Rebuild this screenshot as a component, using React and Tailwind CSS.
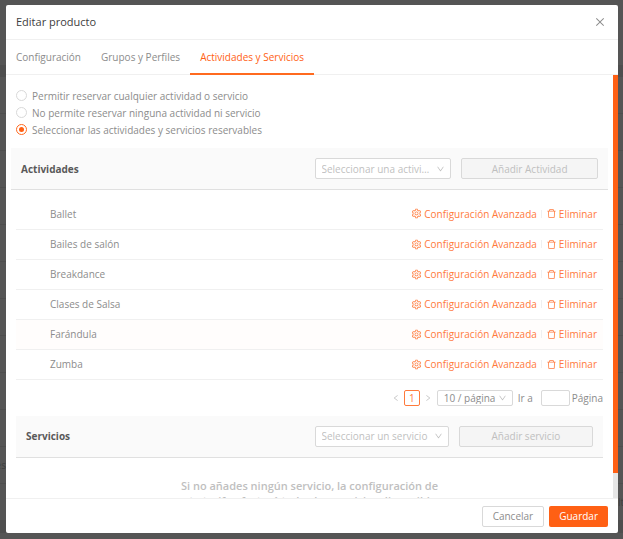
import { useState } from 'react';
import clsx from 'clsx';
import {
  AiOutlineClose,
  AiOutlineDelete,
  AiOutlineDown,
  AiOutlineLeft,
  AiOutlineRight,
  AiOutlineSetting
} from 'react-icons/ai';

const TABS = ['Configuración', 'Grupos y Perfiles', 'Actividades y Servicios'];

const MODES = [
  { id: 'all', label: 'Permitir reservar cualquier actividad o servicio' },
  { id: 'none', label: 'No permite reservar ninguna actividad ni servicio' },
  { id: 'some', label: 'Seleccionar las actividades y servicios reservables' }
];

const ACTIVITIES = ['Ballet', 'Bailes de salón', 'Breakdance', 'Clases de Salsa', 'Farándula', 'Zumba'];

// Rows of the page that stays dimmed under the dialog
const PAGE_ROWS = [
  {}, {}, {}, {}, {}, {}, {}, {}, {}, {}, { left: 'es' }, { right: 'lt' }
];

function DimmedPage() {
  return (
    <div aria-hidden="true" className="absolute inset-0 overflow-hidden pt-[65px] text-[#3f3f3f]">
      <div className="h-3 bg-[#4e4e4e]" />
      {PAGE_ROWS.map((row, index) => (
        <div key={index} className="flex items-center justify-between h-[37px] border-b border-[#4e4e4e]">
          <span className="flex justify-end w-1.5">{row.left}</span>
          <span className="w-[5px]">{row.right}</span>
        </div>
      ))}
      <div className="h-3 bg-[#4e4e4e]" />
    </div>
  );
}

// Select with the arrow drawn over its right edge
function Select({ label, option, compact, className }) {
  return (
    <div className={clsx('relative', className)}>
      <select
        aria-label={label}
        className={clsx(
          'block w-full h-full appearance-none truncate rounded-xs border border-[#d9d9d9] bg-white pl-1.5 leading-3',
          compact ? 'pr-3.5' : 'pr-[18px]'
        )}
      >
        <option>{option}</option>
      </select>
      <AiOutlineDown className="absolute right-1.5 top-1/2 -translate-y-1/2 w-[9px] h-[9px] text-[#bfbfbf] pointer-events-none" />
    </div>
  );
}

// Grey bar with a title, a picker and the add button
function SectionHeader({ title, placeholder, action }) {
  return (
    <div className="grid grid-cols-4 gap-2.5 items-center px-2.5 py-2.5 bg-[#fafafa] border-b border-[#e0e0e0]">
      <h2 className="col-span-2 font-bold text-[#595959]">{title}</h2>
      <Select label={title} option={placeholder} className="h-[21px] text-[#bfbfbf]" />
      <button disabled className="h-[21px] rounded-xs border border-[#d9d9d9] bg-[#f5f5f5] text-[#bfbfbf]">
        {action}
      </button>
    </div>
  );
}

function App() {
  const [tab, setTab] = useState(TABS[2]);
  const [mode, setMode] = useState('some');
  const [scroll, setScroll] = useState(0);

  const handleScroll = (e) => {
    const el = e.currentTarget;
    const max = el.scrollHeight - el.clientHeight;
    setScroll(max > 0 ? el.scrollTop / max : 0);
  };

  return (
    <div className="relative h-screen bg-[#555555] pt-[5px] pr-[5px] pb-1.5 pl-1.5 font-['Open_Sans',sans-serif] text-[10px] leading-4 text-[#8c8c8c]">
      <DimmedPage />
      <div role="dialog" aria-label="Editar producto" className="relative flex flex-col h-full bg-white rounded-xs overflow-hidden">
        {/* Header */}
        <div className="flex items-center justify-between px-2.5 h-[35px] shrink-0 border-b border-[#f0f0f0]">
          <h1 className="text-[11px] font-medium text-[#404040]">Editar producto</h1>
          <button aria-label="Cerrar" className="px-0.5">
            <AiOutlineClose className="w-3 h-3 text-[#8c8c8c]" />
          </button>
        </div>

        {/* Tabs */}
        <div role="tablist" className="flex h-[35px] shrink-0 border-b border-[#f0f0f0]">
          {TABS.map((name) => (
            <button
              key={name}
              role="tab"
              aria-selected={tab === name}
              onClick={() => setTab(name)}
              className={clsx(
                '-mb-px px-2.5 border-b-2',
                tab === name ? 'border-[#ff6a1f] text-[#ff6014] font-medium' : 'border-transparent'
              )}
            >
              {name}
            </button>
          ))}
        </div>

        {/* Body */}
        <div className="flex flex-1 min-h-0">
          <div onScroll={handleScroll} className="flex-1 min-w-0 overflow-y-auto [scrollbar-width:none] pl-[5px] pr-[5px]">
            <div className="pt-3 pb-2.5 pl-[5px]">
              {MODES.map((item) => (
                <label key={item.id} className="flex items-center gap-[5px] h-[17px]">
                  <input
                    type="radio"
                    name="mode"
                    checked={mode === item.id}
                    onChange={() => setMode(item.id)}
                    className="appearance-none w-[11px] h-[11px] rounded-full border border-[#d9d9d9] bg-white checked:border-[#ff6a1f] checked:bg-[#ff6014] checked:bg-clip-content checked:p-[2px]"
                  />
                  {item.label}
                </label>
              ))}
            </div>

            <SectionHeader title="Actividades" placeholder="Seleccionar una actividad" action="Añadir Actividad" />

            <div className="px-[5px] pt-[9px]">
              <table className="w-full">
                <tbody>
                  {ACTIVITIES.map((name) => (
                    <tr key={name} className={clsx('h-[30px] border-b border-[#f0f0f0]', name === 'Farándula' && 'bg-[#fffdfc]')}>
                      <td className="pl-[34px]">{name}</td>
                      <td className="pr-1.5">
                        <div className="flex items-center justify-end text-[#ff7a3c]">
                          <button className="flex items-center gap-0.5">
                            <AiOutlineSetting className="w-[11px] h-[11px]" />
                            Configuración Avanzada
                          </button>
                          <span className="mx-1 w-px h-2 bg-[#f0f0f0]" />
                          <button className="flex items-center gap-0.5">
                            <AiOutlineDelete className="w-[11px] h-[11px]" />
                            Eliminar
                          </button>
                        </div>
                      </td>
                    </tr>
                  ))}
                </tbody>
              </table>

              {/* Pagination */}
              <div className="flex items-center justify-end py-2.5">
                <button aria-label="Anterior" className="px-1 text-[#bfbfbf]">
                  <AiOutlineLeft className="w-2 h-2" />
                </button>
                <button className="w-4 h-4 rounded-xs border border-[#ff7a3c] text-[#ff7a3c] leading-3">1</button>
                <button aria-label="Siguiente" className="px-1 mr-px text-[#bfbfbf]">
                  <AiOutlineRight className="w-2 h-2" />
                </button>
                <Select compact label="Filas por página" option="10 / página" className="w-[76px] h-4" />
                <label htmlFor="jump" className="pl-[5px] pr-2">Ir a</label>
                <input id="jump" className="w-[29px] h-4 mr-0.5 rounded-xs border border-[#d9d9d9]" />
                <span>Página</span>
              </div>

              <SectionHeader title="Servicios" placeholder="Seleccionar un servicio" action="Añadir servicio" />

              <p className="pt-5 pb-3 text-center text-[11px] leading-[15px] font-semibold text-[#bfbfbf]">
                Si no añades ningún servicio, la configuración de
                <br />
                esta tarifa afectará todos los servicios disponibles
              </p>
            </div>
          </div>

          {/* Scrollbar */}
          <div className="w-[5px] bg-[#e6e6e6]">
            <div className="h-[94%] bg-[#ff6014]" style={{ transform: `translateY(${scroll * 6.4}%)` }} />
          </div>
        </div>

        {/* Footer */}
        <div className="flex items-center justify-end gap-[5px] px-2.5 h-[35px] shrink-0 border-t border-[#f0f0f0]">
          <button className="px-2.5 h-[21px] rounded-xs border border-[#d9d9d9]">Cancelar</button>
          <button className="px-2.5 h-[21px] rounded-xs bg-[#ff6014] text-white font-medium">Guardar</button>
        </div>
      </div>
    </div>
  );
}

export default App;
